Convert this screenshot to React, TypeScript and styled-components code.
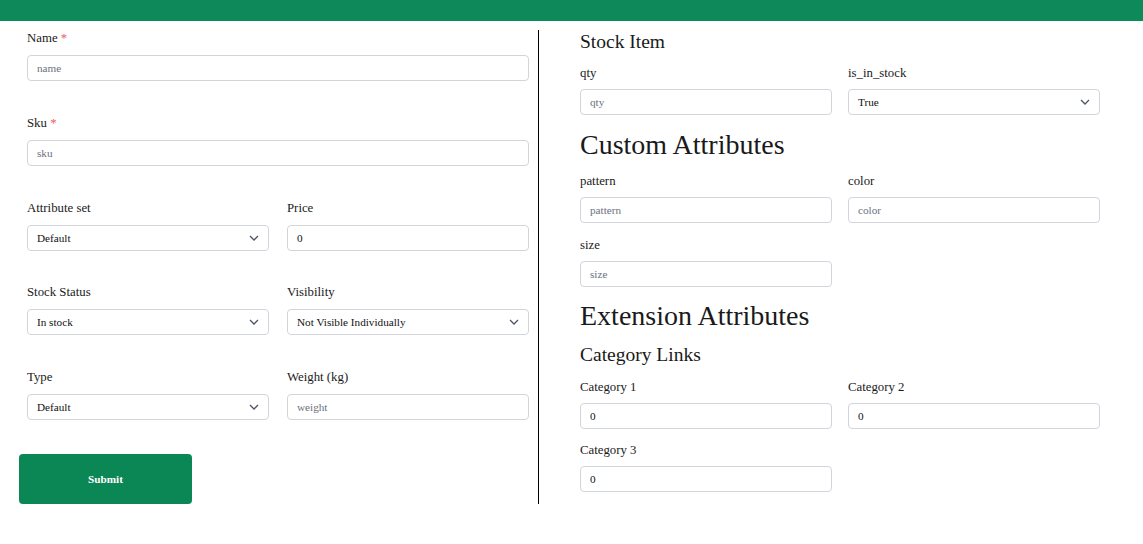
import React from "react";
import styled, { createGlobalStyle } from "styled-components";

const GlobalStyle = createGlobalStyle`
  html, body {
    margin: 0;
    padding: 0;
    background: #fff;
    font-family: "Liberation Serif", "Times New Roman", serif;
    color: #111;
  }
  * { box-sizing: border-box; }
`;

const TopBar = styled.div`
  height: 21px;
  background-color: #0e8a5a;
`;

const Main = styled.div`
  display: flex;
  align-items: flex-start;
  padding-left: 19px;
`;

const LeftPane = styled.div`
  width: 520px;
  margin-top: 9px;
  padding-right: 9px;
  border-right: 1px solid #000;
  display: flex;
  flex-direction: column;
`;

const FieldGrid = styled.div<{ $rowGap: number }>`
  display: grid;
  grid-template-columns: 1fr 1fr;
  column-gap: ${({ $rowGap }) => ($rowGap > 20 ? 18 : 16)}px;
  row-gap: ${({ $rowGap }) => $rowGap}px;
`;

const LeftFields = styled(FieldGrid)`
  padding-left: 8px;
`;

const Field = styled.div<{ $wide?: boolean }>`
  display: flex;
  flex-direction: column;
  grid-column: ${({ $wide }) => ($wide ? "1 / -1" : "auto")};
`;

const Label = styled.label<{ $gap: number }>`
  font-size: 12.8px;
  line-height: 16px;
  margin-bottom: ${({ $gap }) => $gap}px;
  color: #1a1a1a;
`;

const Required = styled.span`
  color: #ef5a5a;
`;

const TextInput = styled.input`
  height: 26px;
  width: 100%;
  border: 1px solid #d1d5db;
  border-radius: 4px;
  padding: 0 9px;
  font-family: "Liberation Serif", "Times New Roman", serif;
  font-size: 11.2px;
  color: #111;
  background: #fff;
  outline: none;

  &::placeholder {
    color: #6b7280;
  }
`;

const SelectWrap = styled.div`
  position: relative;
`;

const Select = styled.select`
  appearance: none;
  -webkit-appearance: none;
  height: 26px;
  width: 100%;
  border: 1px solid #d1d5db;
  border-radius: 4px;
  padding: 0 30px 0 9px;
  font-family: "Liberation Serif", "Times New Roman", serif;
  font-size: 11.2px;
  color: #111;
  background: #fff;
  outline: none;
`;

const Chevron = styled.svg`
  position: absolute;
  right: 10px;
  top: 8px;
  width: 10px;
  height: 10px;
  pointer-events: none;
`;

const SubmitButton = styled.button`
  margin-top: 33.8px;
  width: 173px;
  height: 50px;
  border: none;
  border-radius: 4px;
  background-color: #0b8655;
  color: #fff;
  font-family: "Liberation Serif", "Times New Roman", serif;
  font-size: 11.2px;
  font-weight: bold;
`;

const RightPane = styled.div`
  flex: 1;
  padding: 9px 43px 0 41px;
`;

const Heading = styled.h2<{ $size: number; $top: number }>`
  margin: ${({ $top }) => $top}px 0 0;
  font-weight: normal;
  font-size: ${({ $size }) => $size}px;
  line-height: ${({ $size }) => ($size > 24 ? 32 : 24)}px;
  color: #1a1a1a;
`;

const Section = styled.div<{ $top: number }>`
  margin-top: ${({ $top }) => $top}px;
`;

const Dropdown: React.FC<{ value: string; options: string[] }> = ({ value, options }) => (
  <SelectWrap>
    <Select defaultValue={value}>
      {options.map((o) => (
        <option key={o}>{o}</option>
      ))}
    </Select>
    <Chevron viewBox="0 0 10 10" fill="none" stroke="#4b5563" strokeWidth="1.3">
      <path d="M1 3l4 4 4-4" />
    </Chevron>
  </SelectWrap>
);

const RightField: React.FC<{ label: string; placeholder?: string; value?: string }> = ({
  label,
  placeholder,
  value,
}) => (
  <Field>
    <Label $gap={8}>{label}</Label>
    <TextInput placeholder={placeholder} defaultValue={value} />
  </Field>
);

const App: React.FC = () => {
  return (
    <>
      <GlobalStyle />
      <TopBar />
      <Main>
        <LeftPane>
          <LeftFields $rowGap={33.8}>
            <Field $wide>
              <Label $gap={9}>
                Name <Required>*</Required>
              </Label>
              <TextInput placeholder="name" />
            </Field>
            <Field $wide>
              <Label $gap={9}>
                Sku <Required>*</Required>
              </Label>
              <TextInput placeholder="sku" />
            </Field>
            <Field>
              <Label $gap={9}>Attribute set</Label>
              <Dropdown value="Default" options={["Default"]} />
            </Field>
            <Field>
              <Label $gap={9}>Price</Label>
              <TextInput defaultValue="0" />
            </Field>
            <Field>
              <Label $gap={9}>Stock Status</Label>
              <Dropdown value="In stock" options={["In stock", "Out of stock"]} />
            </Field>
            <Field>
              <Label $gap={9}>Visibility</Label>
              <Dropdown
                value="Not Visible Individually"
                options={["Not Visible Individually", "Catalog", "Search", "Catalog, Search"]}
              />
            </Field>
            <Field>
              <Label $gap={9}>Type</Label>
              <Dropdown value="Default" options={["Default"]} />
            </Field>
            <Field>
              <Label $gap={9}>Weight (kg)</Label>
              <TextInput placeholder="weight" />
            </Field>
          </LeftFields>
          <SubmitButton type="button">Submit</SubmitButton>
        </LeftPane>

        <RightPane>
          <Heading $size={19.5} $top={0}>
            Stock Item
          </Heading>
          <Section $top={11}>
            <FieldGrid $rowGap={14}>
              <RightField label="qty" placeholder="qty" />
              <Field>
                <Label $gap={8}>is_in_stock</Label>
                <Dropdown value="True" options={["True", "False"]} />
              </Field>
            </FieldGrid>
          </Section>

          <Heading $size={28} $top={14}>
            Custom Attributes
          </Heading>
          <Section $top={12}>
            <FieldGrid $rowGap={14}>
              <RightField label="pattern" placeholder="pattern" />
              <RightField label="color" placeholder="color" />
              <RightField label="size" placeholder="size" />
            </FieldGrid>
          </Section>

          <Heading $size={28} $top={13}>
            Extension Attributes
          </Heading>
          <Heading $size={19.5} $top={11}>
            Category Links
          </Heading>
          <Section $top={12}>
            <FieldGrid $rowGap={13}>
              <RightField label="Category 1" value="0" />
              <RightField label="Category 2" value="0" />
              <RightField label="Category 3" value="0" />
            </FieldGrid>
          </Section>
        </RightPane>
      </Main>
    </>
  );
};

export default App;
